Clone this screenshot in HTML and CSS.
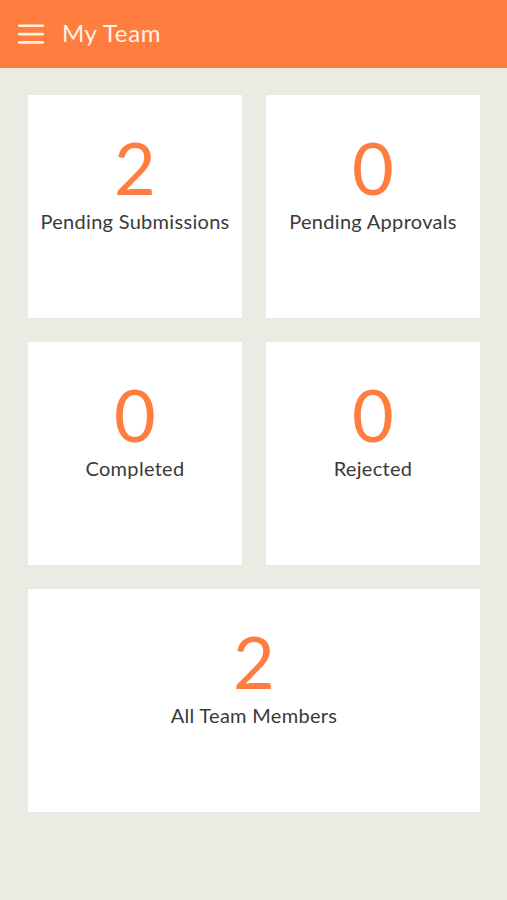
FILE: index.html
```html
<!DOCTYPE html>
<html>
<head>
<meta charset="utf-8">
<link rel="stylesheet" href="styles.css">
</head>
<body>
<header class="appbar">
  <svg class="menu" width="26" height="20" viewBox="0 0 26 20">
    <rect x="0" y="0.5" width="26" height="2.6" rx="1" fill="#FFF1E2"/>
    <rect x="0" y="8.8" width="26" height="2.6" rx="1" fill="#FFF1E2"/>
    <rect x="0" y="17.1" width="26" height="2.6" rx="1" fill="#FFF1E2"/>
  </svg>
  <h1 class="title">My Team</h1>
</header>
<main class="grid">
  <div class="card"><div class="num">2</div><div class="label">Pending Submissions</div></div>
  <div class="card"><div class="num">0</div><div class="label">Pending Approvals</div></div>
  <div class="card"><div class="num">0</div><div class="label">Completed</div></div>
  <div class="card"><div class="num">0</div><div class="label">Rejected</div></div>
  <div class="card wide"><div class="num">2</div><div class="label">All Team Members</div></div>
</main>
</body>
</html>
```
FILE: styles.css
```css
html, body {
  margin: 0;
  padding: 0;
  background: #EBEBE4;
  font-family: Lato, "Noto Sans", sans-serif;
}
.appbar {
  height: 68px;
  background: #FF7D3E;
  display: flex;
  align-items: center;
  padding-left: 18px;
  box-sizing: border-box;
}
.menu {
  display: block;
}
.title {
  margin: 0 0 3px 18px;
  font-size: 24px;
  font-weight: 400;
  color: #FFF4E8;
  letter-spacing: 0.6px;
}
.grid {
  display: grid;
  grid-template-columns: 214px 214px;
  grid-auto-rows: 223px;
  gap: 24px;
  padding: 27px 0 0 28px;
}
.card {
  background: #FFFFFF;
  box-shadow: 0 0 1px rgba(0,0,0,0.06);
  display: flex;
  flex-direction: column;
  align-items: center;
  padding-top: 36px;
  box-sizing: border-box;
}
.wide {
  grid-column: 1 / span 2;
}
.num {
  font-size: 72px;
  line-height: 72px;
  color: #FF7D3E;
  font-weight: 400;
}
.label {
  margin-top: 6px;
  font-size: 20px;
  color: #3A3A3A;
  letter-spacing: 0.3px;
}
```
